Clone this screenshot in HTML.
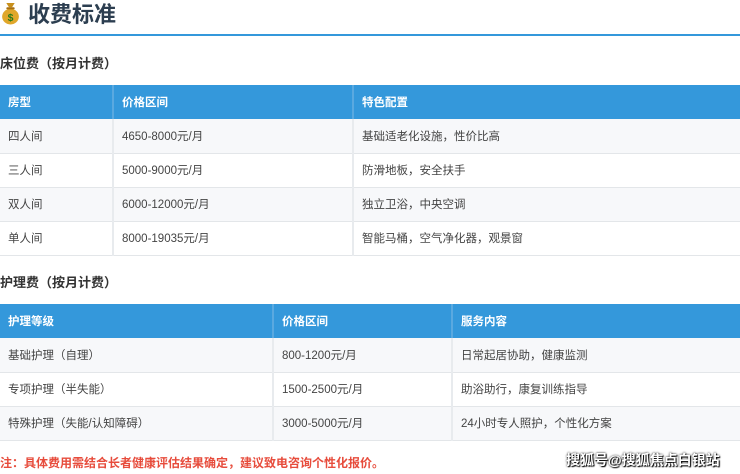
<!DOCTYPE html>
<html><head><meta charset="utf-8"><style>
*{margin:0;padding:0;box-sizing:border-box}
body{width:740px;height:474px;overflow:hidden;background:#fff;font-family:"Liberation Sans","Noto Sans CJK SC",sans-serif;color:#333;position:relative}
.title{position:absolute;left:0;top:0;height:34px;width:740px;font-size:22px;font-weight:bold;color:#2c3e50;line-height:30px;padding-left:28px}
.line{position:absolute;left:0;top:34px;width:740px;height:2px;background:#3498db}
.icon{position:absolute;left:1px;top:2px;width:19px;height:23px}
h3{position:absolute;left:0;font-size:13px;font-weight:bold;color:#333}
table{position:absolute;left:0;width:740px;border-collapse:collapse;font-size:11.5px}
th{background:#3498db;color:#fff;text-align:left;font-weight:bold;height:34px;padding-left:8px;border-right:2px solid #5aa9e0}
td{height:34px;padding-left:8px;border-bottom:1px solid #e3e6e9;border-right:2px solid #e8ebee;color:#444}
tr:nth-child(odd) td{background:#f7f8fa}
th:last-child,td:last-child{border-right:none}
.note{position:absolute;left:0;top:454px;font-size:12px;color:#e74c3c;font-weight:bold}
.wm{position:absolute;left:566px;top:450px;font-size:14px;color:#fff;font-weight:bold;text-shadow:0 0 2px #000,1px 1px 1px #000}
</style></head><body>
<svg class="icon" viewBox="0 0 18 22"><path d="M5 1h8l-2.5 4h-3z" fill="#c8901c"/><ellipse cx="9" cy="14" rx="8" ry="7.5" fill="#e0a72a"/><rect x="5" y="5" width="8" height="2" rx="1" fill="#a86f10"/><text x="9" y="18" font-size="10" text-anchor="middle" fill="#2a7a1a" font-weight="bold" font-family="Liberation Sans">$</text></svg>
<div class="title">收费标准</div>
<div class="line"></div>
<h3 style="top:53px">床位费（按月计费）</h3>
<table style="top:85px">
<colgroup><col style="width:113px"><col style="width:240px"><col></colgroup>
<thead><tr><th>房型</th><th>价格区间</th><th>特色配置</th></tr></thead>
<tbody>
<tr><td>四人间</td><td>4650-8000元/月</td><td>基础适老化设施，性价比高</td></tr>
<tr><td>三人间</td><td>5000-9000元/月</td><td>防滑地板，安全扶手</td></tr>
<tr><td>双人间</td><td>6000-12000元/月</td><td>独立卫浴，中央空调</td></tr>
<tr><td>单人间</td><td>8000-19035元/月</td><td>智能马桶，空气净化器，观景窗</td></tr>
</tbody></table>
<h3 style="top:272px">护理费（按月计费）</h3>
<table style="top:304px">
<colgroup><col style="width:273px"><col style="width:179px"><col></colgroup>
<thead><tr><th>护理等级</th><th>价格区间</th><th>服务内容</th></tr></thead>
<tbody>
<tr><td>基础护理（自理）</td><td>800-1200元/月</td><td>日常起居协助，健康监测</td></tr>
<tr><td>专项护理（半失能）</td><td>1500-2500元/月</td><td>助浴助行，康复训练指导</td></tr>
<tr><td>特殊护理（失能/认知障碍）</td><td>3000-5000元/月</td><td>24小时专人照护，个性化方案</td></tr>
</tbody></table>
<div class="note">注：具体费用需结合长者健康评估结果确定，建议致电咨询个性化报价。</div>
<div class="wm">搜狐号@搜狐焦点白银站</div>
</body></html>
